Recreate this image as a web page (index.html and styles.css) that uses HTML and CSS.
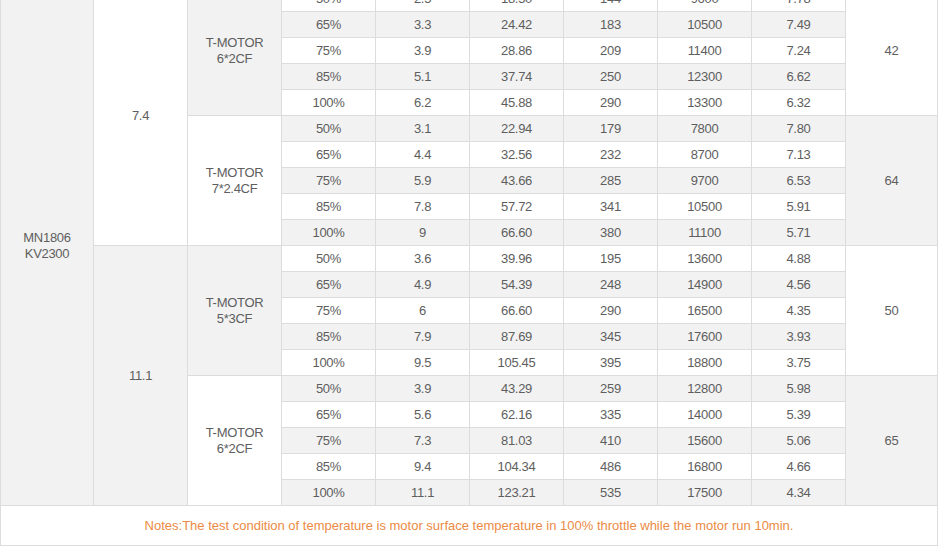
FILE: index.html
```html
<!DOCTYPE html>
<html>
<head>
<meta charset="utf-8">
<link rel="stylesheet" href="styles.css">
</head>
<body>
<table class="spec">
<colgroup>
<col class="c-first"><col class="c"><col class="c"><col class="c"><col class="c"><col class="c"><col class="c"><col class="c"><col class="c"><col class="c-last">
</colgroup>
<tbody>
<tr class="w"><td rowspan="20" class="g">MN1806<br>KV2300</td><td rowspan="10" class="wh">7.4</td><td rowspan="5" class="g">T-MOTOR<br>6*2CF</td><td>50%</td><td>2.5</td><td>18.50</td><td>144</td><td>9600</td><td>7.78</td><td rowspan="5" class="wh">42</td></tr>
<tr class="s"><td>65%</td><td>3.3</td><td>24.42</td><td>183</td><td>10500</td><td>7.49</td></tr>
<tr class="w"><td>75%</td><td>3.9</td><td>28.86</td><td>209</td><td>11400</td><td>7.24</td></tr>
<tr class="s"><td>85%</td><td>5.1</td><td>37.74</td><td>250</td><td>12300</td><td>6.62</td></tr>
<tr class="w"><td>100%</td><td>6.2</td><td>45.88</td><td>290</td><td>13300</td><td>6.32</td></tr>
<tr class="s"><td rowspan="5" class="wh">T-MOTOR<br>7*2.4CF</td><td>50%</td><td>3.1</td><td>22.94</td><td>179</td><td>7800</td><td>7.80</td><td rowspan="5" class="g">64</td></tr>
<tr class="w"><td>65%</td><td>4.4</td><td>32.56</td><td>232</td><td>8700</td><td>7.13</td></tr>
<tr class="s"><td>75%</td><td>5.9</td><td>43.66</td><td>285</td><td>9700</td><td>6.53</td></tr>
<tr class="w"><td>85%</td><td>7.8</td><td>57.72</td><td>341</td><td>10500</td><td>5.91</td></tr>
<tr class="s"><td>100%</td><td>9</td><td>66.60</td><td>380</td><td>11100</td><td>5.71</td></tr>
<tr class="w"><td rowspan="10" class="g">11.1</td><td rowspan="5" class="g">T-MOTOR<br>5*3CF</td><td>50%</td><td>3.6</td><td>39.96</td><td>195</td><td>13600</td><td>4.88</td><td rowspan="5" class="wh">50</td></tr>
<tr class="s"><td>65%</td><td>4.9</td><td>54.39</td><td>248</td><td>14900</td><td>4.56</td></tr>
<tr class="w"><td>75%</td><td>6</td><td>66.60</td><td>290</td><td>16500</td><td>4.35</td></tr>
<tr class="s"><td>85%</td><td>7.9</td><td>87.69</td><td>345</td><td>17600</td><td>3.93</td></tr>
<tr class="w"><td>100%</td><td>9.5</td><td>105.45</td><td>395</td><td>18800</td><td>3.75</td></tr>
<tr class="s"><td rowspan="5" class="wh">T-MOTOR<br>6*2CF</td><td>50%</td><td>3.9</td><td>43.29</td><td>259</td><td>12800</td><td>5.98</td><td rowspan="5" class="g">65</td></tr>
<tr class="w"><td>65%</td><td>5.6</td><td>62.16</td><td>335</td><td>14000</td><td>5.39</td></tr>
<tr class="s"><td>75%</td><td>7.3</td><td>81.03</td><td>410</td><td>15600</td><td>5.06</td></tr>
<tr class="w"><td>85%</td><td>9.4</td><td>104.34</td><td>486</td><td>16800</td><td>4.66</td></tr>
<tr class="s"><td>100%</td><td>11.1</td><td>123.21</td><td>535</td><td>17500</td><td>4.34</td></tr>
<tr class="notes-row"><td colspan="10" class="notes">Notes:The test condition of temperature is motor surface temperature in 100% throttle while the motor run 10min.</td></tr>
</tbody>
</table>
</body>
</html>
```
FILE: styles.css
```css
html, body {
  margin: 0;
  padding: 0;
  background: #ffffff;
}
.spec {
  border-collapse: collapse;
  table-layout: fixed;
  width: 937px;
  margin-top: -15px;
  font-family: "Liberation Sans", Arial, sans-serif;
  font-size: 13px;
  letter-spacing: -0.3px;
  color: #5e5e5e;
}
.spec .c-first { width: 93px; }
.spec .c { width: 94px; }
.spec .c-last { width: 92px; }
.spec td {
  border: 1px solid #dcdcdc;
  height: 25px;
  padding: 0;
  text-align: center;
  vertical-align: middle;
  line-height: 16px;
}
.spec tr.w td { background: #ffffff; }
.spec tr.s td { background: #f2f2f2; }
.spec tr td.g { background: #f2f2f2; }
.spec tr td.wh { background: #ffffff; }
.spec .notes {
  height: 39px;
  letter-spacing: 0;
  color: #ec8a44;
  background: #ffffff;
}
```
